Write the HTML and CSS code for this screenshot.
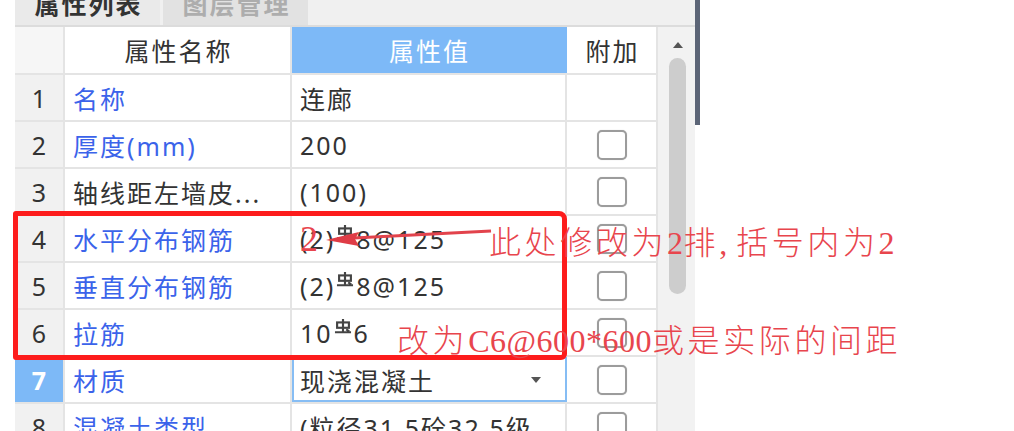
FILE: index.html
```html
<!DOCTYPE html>
<html lang="zh-CN">
<head>
<meta charset="utf-8">
<title>属性列表</title>
<link rel="stylesheet" href="styles.css">
</head>
<body>
<div class="screen">
  <section class="panel">
    <nav class="tabs">
      <div class="tab tab-active"><span>属性列表</span></div>
      <div class="tab"><span>图层管理</span></div>
    </nav>
    <div class="body">
      <div class="grid">
        <div class="row head">
          <div class="c num"></div>
          <div class="c name">属性名称</div>
          <div class="c val sel">属性值</div>
          <div class="c ext">附加</div>
        </div>
        <div class="row">
          <div class="c num">1</div>
          <div class="c name link">名称</div>
          <div class="c val">连廊</div>
          <div class="c ext"></div>
        </div>
        <div class="row">
          <div class="c num">2</div>
          <div class="c name link">厚度(mm)</div>
          <div class="c val">200</div>
          <div class="c ext"><span class="box"></span></div>
        </div>
        <div class="row">
          <div class="c num">3</div>
          <div class="c name">轴线距左墙皮...</div>
          <div class="c val">(100)</div>
          <div class="c ext"><span class="box"></span></div>
        </div>
        <div class="row">
          <div class="c num">4</div>
          <div class="c name link">水平分布钢筋</div>
          <div class="c val">(2)<svg class="rb" viewBox="0 0 16 14" width="18" height="15"><rect x="2.5" y="3.2" width="11" height="5" fill="none" stroke="#444" stroke-width="2"/><path d="M8 0V12M0.5 12.4H15.5M11 9.6L13.8 11.6" stroke="#444" stroke-width="2" fill="none"/></svg>8@125</div>
          <div class="c ext"><span class="box"></span></div>
        </div>
        <div class="row">
          <div class="c num">5</div>
          <div class="c name link">垂直分布钢筋</div>
          <div class="c val">(2)<svg class="rb" viewBox="0 0 16 14" width="18" height="15"><rect x="2.5" y="3.2" width="11" height="5" fill="none" stroke="#444" stroke-width="2"/><path d="M8 0V12M0.5 12.4H15.5M11 9.6L13.8 11.6" stroke="#444" stroke-width="2" fill="none"/></svg>8@125</div>
          <div class="c ext"><span class="box"></span></div>
        </div>
        <div class="row">
          <div class="c num">6</div>
          <div class="c name link">拉筋</div>
          <div class="c val">10<svg class="rb" viewBox="0 0 16 14" width="18" height="15"><rect x="2.5" y="3.2" width="11" height="5" fill="none" stroke="#444" stroke-width="2"/><path d="M8 0V12M0.5 12.4H15.5M11 9.6L13.8 11.6" stroke="#444" stroke-width="2" fill="none"/></svg>6</div>
          <div class="c ext"><span class="box"></span></div>
        </div>
        <div class="row">
          <div class="c num sel">7</div>
          <div class="c name link">材质</div>
          <div class="c val dd"><span class="dd-text">现浇混凝土</span><svg class="dd-arrow" viewBox="0 0 10 6" width="10" height="6"><path d="M0 0H10L5 6Z" fill="#555"/></svg></div>
          <div class="c ext"><span class="box"></span></div>
        </div>
        <div class="row">
          <div class="c num">8</div>
          <div class="c name link">混凝土类型</div>
          <div class="c val">(粒径31.5砼32.5级</div>
          <div class="c ext"><span class="box"></span></div>
        </div>
      </div>
      <div class="scroll">
        <svg class="up" viewBox="0 0 10 6" width="10" height="6"><path d="M0 6H10L5 0Z" fill="#555"/></svg>
        <div class="thumb"></div>
      </div>
    </div>
  </section>
  <div class="edge"></div>

  <div class="redbox"></div>
  <svg class="arrow" viewBox="0 0 1014 431" width="1014" height="431">
    <path d="M491 231 L354 238" stroke="#e2434c" stroke-width="3.2" fill="none"/>
    <polygon points="326,240 359,232 355,239 359,246" fill="#df3c46"/>
  </svg>
  <div class="fix">2</div>
  <div class="note note1">此处修改为<span class="lat">2</span>排<span class="lat">, </span>括号内为<span class="lat">2</span></div>
  <div class="note note2">改为<span class="lat">C6@600*600</span>或是实际的间距</div>
</div>
</body>
</html>
```
FILE: styles.css
```css
* { box-sizing: border-box; }
html, body {
  margin: 0;
  padding: 0;
  background: #fff;
}
body {
  width: 1014px;
  height: 431px;
  overflow: hidden;
  font-family: "Noto Sans", "Noto Sans CJK SC", sans-serif;
}
.screen {
  position: relative;
  width: 1014px;
  height: 431px;
  display: flex;
  align-items: flex-start;
  padding-left: 15px;
}
.panel {
  width: 680px;
  height: 431px;
  display: flex;
  flex-direction: column;
  overflow: hidden;
}
.tabs {
  height: 27px;
  flex: none;
  background: #f0f0f0;
  border-bottom: 2px solid #dcdcdc;
  display: flex;
  gap: 3px;
  overflow: hidden;
}
.tab {
  width: 145px;
  height: 25px;
  background: #e2e2e2;
  color: #adadad;
  font-weight: bold;
  font-size: 25px;
  letter-spacing: 2px;
  line-height: 25px;
  text-align: center;
  overflow: hidden;
}
.tab span { display: block; margin-top: -8px; padding-left: 2px; }
.tab-active { background: #eaeaea; color: #333; }

.body {
  flex: 1;
  display: flex;
  min-height: 0;
}
.grid {
  width: 643px;
  flex: none;
}
.row {
  display: flex;
  height: 47px;
  border-bottom: 2px solid #e4e4e4;
}
.row.head { height: 48px; }
.c {
  display: flex;
  align-items: center;
  border-right: 2px solid #e4e4e4;
  font-size: 25px;
  letter-spacing: 2px;
  color: #333;
  white-space: nowrap;
  overflow: hidden;
}
.num {
  width: 50px;
  justify-content: center;
  background: #f1f1f1;
  padding-left: 2px;
}
.head .num { background: #f6f6f6; }
.name { width: 227px; padding-left: 8px; }
.val { width: 275px; padding-left: 8px; }
.ext { width: 91px; justify-content: center; }
.head .name, .head .val, .head .ext { justify-content: center; padding-left: 2px; }
.head .val.sel {
  background: #7db9f7;
  color: #fff;
  border-right-color: #7db9f7;
}
.num.sel {
  background: #7db9f7;
  color: #fff;
  font-weight: bold;
}
.link { color: #3b63ea; }
.box {
  width: 30px;
  height: 30px;
  border: 2px solid #9c9c9c;
  border-radius: 5px;
  background: #fff;
  box-shadow: 0 0 1px #c8c8c8;
}
.rb {
  flex: none;
  align-self: center;
  margin: -12px 2px 0 1px;
}
.val.dd {
  border: 2px solid #86bdf4;
  justify-content: space-between;
  padding-left: 6px;
  padding-right: 24px;
}
.dd-arrow { flex: none; }

.scroll {
  width: 37px;
  flex: none;
  background: #f2f2f2;
  display: flex;
  flex-direction: column;
  align-items: center;
  padding-top: 15px;
  padding-left: 2px;
}
.up { flex: none; }
.thumb {
  width: 17px;
  height: 236px;
  margin-top: 10px;
  border-radius: 9px;
  background: #cdcdcd;
}
.edge {
  width: 5px;
  height: 125px;
  flex: none;
  background: #5c6577;
}

/* annotations lying over the screenshot */
.redbox {
  position: absolute;
  left: 13px;
  top: 211px;
  width: 554px;
  height: 149px;
  border: 5px solid #fd1c1c;
  border-radius: 3px 8px 6px 3px;
}
.arrow {
  position: absolute;
  left: 0;
  top: 0;
}
.fix {
  position: absolute;
  left: 300px;
  top: 221px;
  font-family: "Liberation Serif", serif;
  font-size: 36px;
  line-height: 36px;
  color: #e8454d;
}
.note {
  position: absolute;
  color: #e8454d;
  font-family: "Liberation Serif", "Noto Sans CJK SC", serif;
  font-weight: 300;
  font-size: 32px;
  line-height: 32px;
  letter-spacing: 3.6px;
  white-space: nowrap;
}
.note .lat { letter-spacing: 0.5px; }
.note1 { left: 489px; top: 227px; }
.note2 { left: 397px; top: 325px; }
```
